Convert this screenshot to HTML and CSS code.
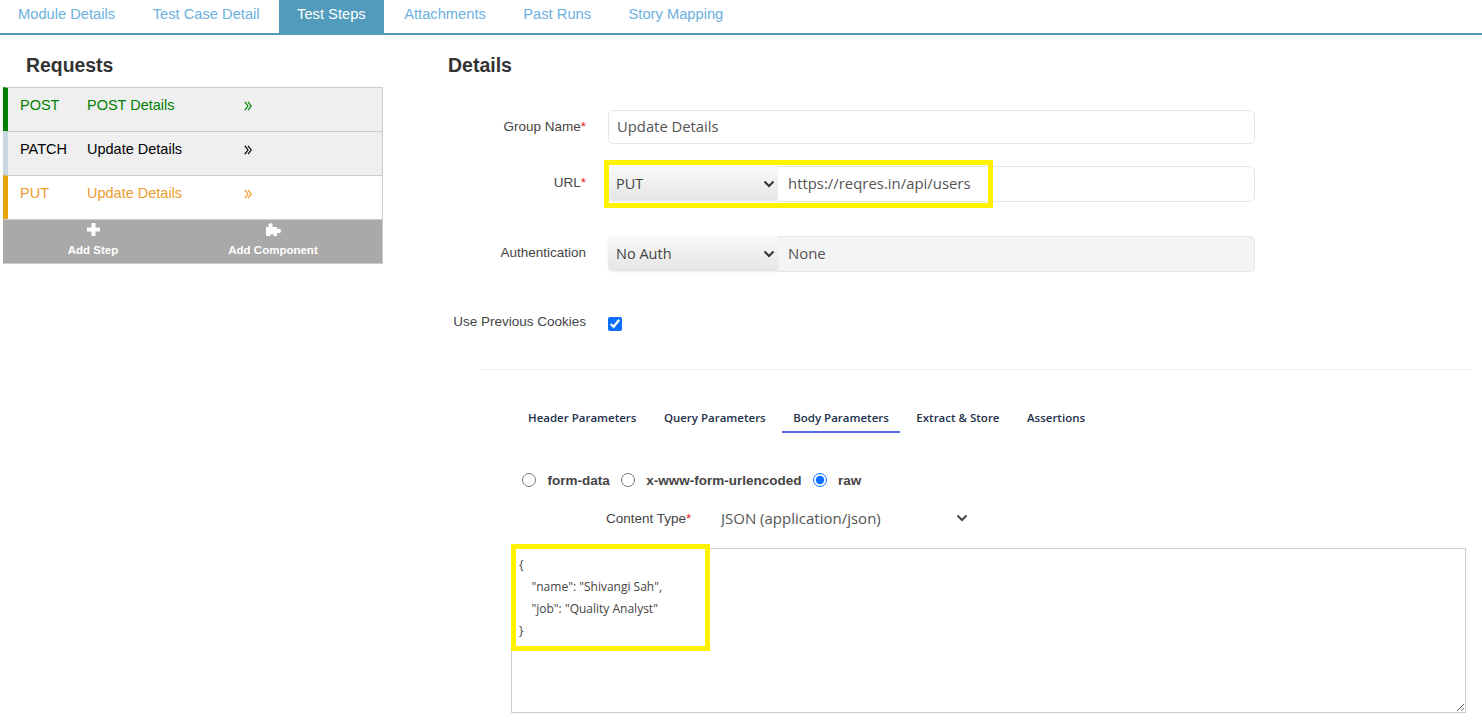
FILE: index.html
```html
<!DOCTYPE html>
<html lang="en">
<head>
    <meta charset="UTF-8">
    <title>Test Steps</title>
    <link rel="stylesheet" href="styles.css">
</head>
<body>
    <!-- Top tabs -->
    <nav class="top-tabs">
        <a class="top-tab">Module Details</a>
        <a class="top-tab">Test Case Detail</a>
        <a class="top-tab active">Test Steps</a>
        <a class="top-tab">Attachments</a>
        <a class="top-tab">Past Runs</a>
        <a class="top-tab">Story Mapping</a>
    </nav>

    <div class="page">
        <!-- Requests list -->
        <aside class="requests">
            <h2 class="requests-title">Requests</h2>
            <div class="request-list">
                <div class="request post">
                    <span class="method">POST</span><span class="request-name">POST Details</span>
                    <svg class="arrows" width="8" height="10" viewBox="0 0 8 10"><path d="M.8.800 4 5 .8 9.200M4 .8 7.200 5 4 9.200" fill="none" stroke="currentColor" stroke-width="1.200"/></svg>
                </div>
                <div class="request patch">
                    <span class="method">PATCH</span><span class="request-name">Update Details</span>
                    <svg class="arrows" width="8" height="10" viewBox="0 0 8 10"><path d="M.8.800 4 5 .8 9.200M4 .8 7.200 5 4 9.200" fill="none" stroke="currentColor" stroke-width="1.200"/></svg>
                </div>
                <div class="request put">
                    <span class="method">PUT</span><span class="request-name">Update Details</span>
                    <svg class="arrows" width="8" height="10" viewBox="0 0 8 10"><path d="M.8.800 4 5 .8 9.200M4 .8 7.200 5 4 9.200" fill="none" stroke="currentColor" stroke-width="1.200"/></svg>
                </div>
                <div class="request-actions">
                    <a class="action">
                        <svg width="13" height="13" viewBox="0 0 13 13"><path d="M4.500 0h4v4.500H13v4H8.500V13h-4V8.500H0v-4h4.500z" fill="#fff"/></svg>
                        <span>Add Step</span>
                    </a>
                    <a class="action">
                        <svg width="15" height="13" viewBox="0 0 15 13"><path d="M0 4h2.800C2 2.600 2.200.3 4.500.3S7 2.600 6.200 4H11v2.300c1.400-.8 4-.6 4 1.700s-2.600 2.500-4 1.700V13H7.500c.4-1.200-.2-2-1.500-2s-1.900.8-1.500 2H0z" fill="#fff"/></svg>
                        <span>Add Component</span>
                    </a>
                </div>
            </div>
        </aside>

        <!-- Request details -->
        <main class="details">
            <h2 class="details-title">Details</h2>

            <div class="form-row row-group">
                <label class="form-label">Group Name<span class="req">*</span></label>
                <input class="text-input" type="text" value="Update Details">
            </div>

            <div class="form-row row-url">
                <label class="form-label">URL<span class="req">*</span></label>
                <div class="input-group">
                    <select class="select-input"><option>PUT</option></select>
                    <input class="text-input joined" type="text" value="https://reqres.in/api/users">
                    <div class="highlight highlight-url"></div>
                </div>
            </div>

            <div class="form-row row-auth">
                <label class="form-label">Authentication</label>
                <div class="input-group">
                    <select class="select-input"><option>No Auth</option></select>
                    <input class="text-input joined disabled" type="text" value="None" disabled>
                </div>
            </div>

            <div class="form-row row-cookies">
                <label class="form-label">Use Previous Cookies</label>
                <input class="cookie-check" type="checkbox" checked>
            </div>

            <hr class="divider">

            <div class="param-tabs">
                <a class="param-tab">Header Parameters</a>
                <a class="param-tab">Query Parameters</a>
                <a class="param-tab active">Body Parameters</a>
                <a class="param-tab">Extract &amp; Store</a>
                <a class="param-tab">Assertions</a>
            </div>

            <div class="body-types">
                <input type="radio" name="bodyType"><label>form-data</label>
                <input type="radio" name="bodyType"><label>x-www-form-urlencoded</label>
                <input type="radio" name="bodyType" checked><label>raw</label>
            </div>

            <div class="content-type">
                <label class="content-label">Content Type<span class="req">*</span></label>
                <select class="content-select"><option>JSON (application/json)</option></select>
            </div>

            <div class="body-editor">
                <textarea class="body-text" spellcheck="false">{
    "name": "Shivangi Sah",
    "job": "Quality Analyst"
}</textarea>
                <div class="highlight highlight-body"></div>
            </div>
        </main>
    </div>
</body>
</html>
```

FILE: styles.css
```css
html, body {
    height: 727px;
    overflow: hidden;
}

body {
    margin: 0;
    background-color: #fff;
    font-family: "Liberation Sans", Arial, sans-serif;
    color: #333;
}

/* top tabs */
.top-tabs {
    display: flex;
    height: 33px;
    border-bottom: 2px solid #529bbd;
}

.top-tab {
    padding: 0 18.500px 0 18px;
    margin-right: 1px;
    font-size: 14.700px;
    line-height: 29px;
    color: #6cb0e0;
}

.top-tab.active {
    margin-right: 2px;
    background-color: #529bbd;
    color: #fff;
}

.page {
    display: flex;
}

/* requests */
.requests {
    width: 380px;
    margin-left: 3px;
    flex-shrink: 0;
}

.requests-title {
    margin: 0;
    padding: 18px 0 9px 23px;
    font-size: 19.400px;
    line-height: 25px;
    font-weight: bold;
    color: #333;
}

.request-list {
    border-right: 1px solid #ccc;
    border-bottom: 1px solid #ccc;
}

.request {
    display: flex;
    height: 43px;
    border-top: 1px solid #ccc;
    border-left: 5px solid #ccc;
    padding-left: 12px;
    font-size: 14.500px;
    line-height: 35px;
    background-color: #efefef;
}

.method {
    width: 67px;
}

.request-name {
    width: 156px;
}

.arrows {
    margin: 13px 0 0 1px;
}

.request.post {
    border-left-color: #008000;
    color: #008000;
}

.request.patch {
    border-left-color: #c8d8e2;
    color: #000;
}

.request.put {
    border-left-color: #e8a50a;
    background-color: #fff;
    color: #ee9b2d;
}

.request-actions {
    display: flex;
    height: 43px;
    border-top: 1px solid #ccc;
    background-color: #a9a9a9;
    color: #fff;
    font-size: 11.500px;
    font-weight: bold;
}

.action {
    display: flex;
    flex-direction: column;
    align-items: center;
    width: 180px;
    padding-top: 3px;
}

.action span {
    line-height: 15px;
    margin-top: 7px;
}

/* details */
.details {
    flex: 1;
    margin-left: 65px;
    min-width: 0;
}

.details-title {
    margin: 0;
    padding-top: 18px;
    font-size: 19.500px;
    line-height: 25px;
    font-weight: bold;
    color: #333;
}

.form-row {
    display: flex;
}

.form-label {
    width: 138px;
    text-align: right;
    font-size: 13.500px;
    line-height: 34px;
    color: #444;
    margin-right: 22px;
    flex-shrink: 0;
}

.req {
    color: #e02020;
}

.row-group {
    margin-top: 32px;
}

.row-url {
    margin-top: 22px;
}

.row-auth {
    margin-top: 34px;
}

.text-input {
    box-sizing: border-box;
    width: 647px;
    height: 34px;
    padding: 0 8px 2px;
    border: 1px solid #e6e6e6;
    border-radius: 5px;
    font-family: "Open Sans", sans-serif;
    font-size: 14.800px;
    color: #555;
    background-color: #fff;
}

.input-group {
    position: relative;
    display: flex;
    width: 647px;
    height: 36px;
}

.select-input {
    appearance: none;
    box-sizing: border-box;
    width: 170px;
    height: 35px;
    padding: 0 8px;
    border: none;
    border-radius: 5px 0 0 5px;
    box-shadow: 0 1px 2px rgba(0, 0, 0, 0.08);
    font-family: "Open Sans", sans-serif;
    font-size: 14.500px;
    color: #444;
    background: url("data:image/svg+xml,%3Csvg xmlns='http://www.w3.org/2000/svg' width='12' height='8'%3E%3Cpath d='M1.500 1.500 6 6l4.500-4.500' fill='none' stroke='%23333' stroke-width='2'/%3E%3C/svg%3E") no-repeat right 3px center, linear-gradient(#f9f9f9, #e6e6e6);
}

.text-input.joined {
    flex: 1;
    width: auto;
    height: 36px;
    padding-left: 10px;
    border-radius: 0 5px 5px 0;
    border-left: none;
    font-size: 14.900px;
}

.text-input.disabled {
    background-color: #f4f4f4;
}

.highlight {
    position: absolute;
    box-sizing: border-box;
    border: 5px solid #fff200;
    pointer-events: none;
}

.highlight-url {
    left: -4px;
    top: -6px;
    width: 389px;
    height: 48px;
}

.row-cookies {
    margin-top: 34px;
}

.row-cookies .form-label {
    line-height: 32px;
}

.cookie-check {
    width: 14px;
    height: 14px;
    margin: 11px 0 0 0;
    accent-color: #0d6efd;
}

.divider {
    margin: 31px 10px 0 32px;
    border: none;
    border-top: 1px solid #eee;
}

/* parameter tabs */
.param-tabs {
    display: flex;
    margin: 38px 0 0 69px;
}

.param-tab {
    padding: 0 11px 3px;
    margin-right: 5.500px;
    font-family: "Open Sans", sans-serif;
    font-size: 11.500px;
    font-weight: 600;
    line-height: 20px;
    color: #22304a;
    border-bottom: 2px solid transparent;
}

.param-tab.active {
    border-bottom-color: #5369ea;
}

.body-types {
    display: flex;
    align-items: center;
    margin: 37px 0 0 74px;
    height: 20px;
    font-size: 13.500px;
    font-weight: bold;
    color: #444;
}

.body-types input {
    width: 14px;
    height: 14px;
    margin: 0 11.500px 0 0;
    accent-color: #0d6efd;
}

.body-types label {
    margin-right: 11px;
}

.content-type {
    display: flex;
    align-items: center;
    margin: 18px 0 0 158px;
    height: 20px;
}

.content-label {
    width: 115px;
    font-size: 13.500px;
    color: #444;
}

.content-select {
    appearance: none;
    width: 247px;
    height: 28px;
    padding: 0;
    border: none;
    font-family: "Open Sans", sans-serif;
    font-size: 15px;
    color: #555;
    background: url("data:image/svg+xml,%3Csvg xmlns='http://www.w3.org/2000/svg' width='12' height='8'%3E%3Cpath d='M1.500 1.500 6 6l4.500-4.500' fill='none' stroke='%23444' stroke-width='2'/%3E%3C/svg%3E") no-repeat right 0 center;
}

/* body editor */
.body-editor {
    position: relative;
    margin: 20px 16px 0 63px;
}

.body-text {
    display: block;
    box-sizing: border-box;
    width: 955px;
    height: 165px;
    padding: 5px 7px;
    border: 1px solid #ccc;
    font-family: "Open Sans", sans-serif;
    font-size: 12px;
    line-height: 22px;
    color: #444;
    outline: none;
}

.highlight-body {
    left: 0;
    top: -4px;
    width: 199px;
    height: 107px;
}
```
